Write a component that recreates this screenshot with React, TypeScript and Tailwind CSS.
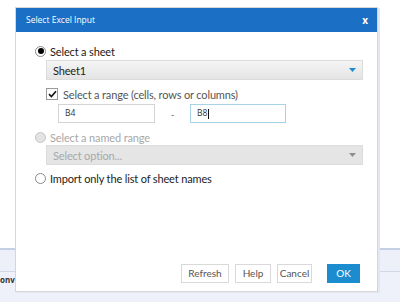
import React from "react";

function Radio({ state }: { state: "on" | "off" | "disabled" }) {
  if (state === "on")
    return (
      <span className="w-[11px] h-[11px] rounded-full border border-[#8a8a8a] bg-white flex items-center justify-center shrink-0">
        <span className="w-[6px] h-[6px] rounded-full bg-black" />
      </span>
    );
  if (state === "disabled")
    return <span className="w-[11px] h-[11px] rounded-full border border-[#c4c4c4] bg-[#e3e3e3] shrink-0" />;
  return <span className="w-[11px] h-[11px] rounded-full border border-[#8a8a8a] bg-white shrink-0" />;
}

function Caret({ color }: { color: string }) {
  return (
    <svg width="7" height="4" viewBox="0 0 7 4" className="shrink-0">
      <path d="M0 0 L7 0 L3.5 4 Z" fill={color} />
    </svg>
  );
}

export default function App() {
  return (
    <div className="relative w-[400px] h-[302px] overflow-hidden bg-white font-['Lato','Open_Sans',sans-serif]">
      <div className="flex flex-col h-full">
        <div className="h-[248px] bg-white" />
        <div className="h-[23px] border-t-2 border-[#c5cfe4] bg-[#edf0f9]" />
        <div className="flex-1 border-t border-[#d3d8e6] bg-[#eef1fa] pt-[2px]">
          <span className="block text-[8px] font-bold text-[#333] font-['Open_Sans',sans-serif]">onv</span>
        </div>
      </div>

      <div className="absolute left-[15px] top-[7px] w-[363px] h-[285px] bg-white border border-[#d6d6d6] shadow-[2px_1px_0_#e3e7f1] flex flex-col">
        <div className="h-[24px] bg-[#1b6fc5] flex items-center justify-between pl-[10px] pr-[9px] shrink-0">
          <span className="text-[8.5px] text-white leading-none font-['Open_Sans',sans-serif]">Select Excel Input</span>
          <span className="text-[10px] font-bold text-white leading-none font-['Open_Sans',sans-serif]">x</span>
        </div>

        <div className="flex flex-col pl-[19px] pr-[14px] pt-[12px] text-[11px] leading-none tracking-[-0.15px]">
          <div className="h-[14px] flex items-center gap-[4px]">
            <Radio state="on" />
            <span className="text-[#222]">Select a sheet</span>
          </div>

          <div className="mt-[2px] ml-[11px] h-[20px] border border-[#dcdcdc] bg-gradient-to-b from-[#f5f5f5] to-[#e4e4e4] flex items-center justify-between pl-[6px] pr-[6px]">
            <span className="text-[#222] text-[11px]">Sheet1</span>
            <Caret color="#1b8ccf" />
          </div>

          <div className="mt-[7px] ml-[11px] h-[14px] flex items-center gap-[5px]">
            <span className="w-[12px] h-[12px] border border-[#9a9a9a] bg-white flex items-center justify-center shrink-0">
              <svg width="9" height="8" viewBox="0 0 9 8">
                <path d="M1 4.2 L3.4 6.5 L8 1.2" fill="none" stroke="#111" strokeWidth="1.6" />
              </svg>
            </span>
            <span className="text-[#555]">Select a range (cells, rows or columns)</span>
          </div>

          <div className="mt-[3px] ml-[23px] flex items-center h-[19px] tracking-normal">
            <div className="w-[97px] h-[19px] border border-[#d4d4d4] bg-white flex items-center pl-[6px] text-[8.5px] text-[#333] font-['Open_Sans',sans-serif]">
              B4
            </div>
            <span className="w-[35px] text-center text-[#666] text-[10px]">-</span>
            <div className="w-[96px] h-[19px] border border-[#a6d2ea] bg-white flex items-center pl-[6px] text-[8.5px] text-[#333] font-['Open_Sans',sans-serif]">
              B8<span className="w-px h-[10px] bg-[#111] ml-px" />
            </div>
          </div>

          <div className="mt-[7px] h-[14px] flex items-center gap-[4px]">
            <Radio state="disabled" />
            <span className="text-[#a8a8a8]">Select a named range</span>
          </div>

          <div className="mt-[1px] ml-[11px] h-[20px] border border-[#dcdcdc] bg-[#e5e5e5] flex items-center justify-between pl-[6px] pr-[6px]">
            <span className="text-[#a8a8a8] text-[11px]">Select option...</span>
            <Caret color="#8f8f8f" />
          </div>

          <div className="mt-[6px] h-[14px] flex items-center gap-[4px]">
            <Radio state="off" />
            <span className="text-[#222]">Import only the list of sheet names</span>
          </div>
        </div>

        <div className="flex-1" />

        <div className="flex justify-end items-center pr-[17px] pb-[8px] text-[10px]">
          <button className="w-[48px] h-[19px] border border-[#d9d9d9] bg-white text-[#555]">Refresh</button>
          <button className="ml-[6px] w-[36px] h-[19px] border border-[#d9d9d9] bg-white text-[#555]">Help</button>
          <button className="ml-[6px] w-[35px] h-[19px] border border-[#d9d9d9] bg-white text-[#555]">Cancel</button>
          <button className="ml-[15px] w-[33px] h-[19px] bg-[#1b8ccf] text-white">OK</button>
        </div>
      </div>
    </div>
  );
}
